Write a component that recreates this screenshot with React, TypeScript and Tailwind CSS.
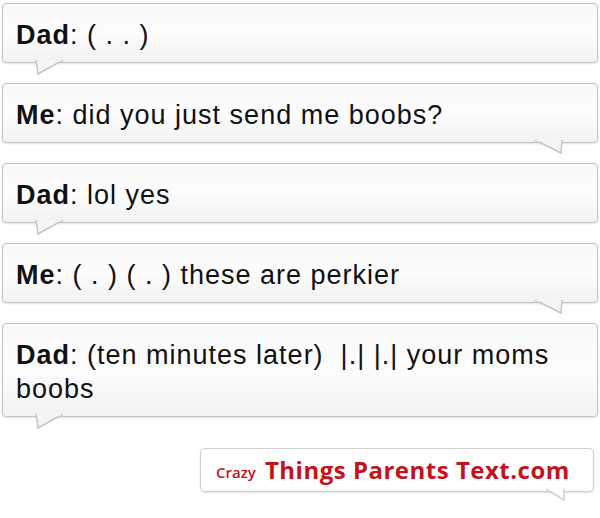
const messages = [
  { who: "Dad", text: " ( . . )", side: "left" },
  { who: "Me", text: " did you just send me boobs?", side: "right" },
  { who: "Dad", text: " lol yes", side: "left" },
  { who: "Me", text: " ( . ) ( . ) these are perkier", side: "right" },
  { who: "Dad", text: " (ten minutes later)  |.| |.| your moms boobs", side: "left" },
];

const Tail = ({ side }: { side: string }) => {
  if (side === "left") {
    return (
      <svg
        className="absolute left-[30px] top-full -mt-[2px]"
        width="32"
        height="16"
        viewBox="0 0 32 16"
      >
        <path d="M3 0 L5 14 L30 0" fill="#f4f4f4" stroke="#c4c4c4" strokeWidth="1.5" />
        <rect x="4" y="0" width="24" height="1.6" fill="#f4f4f4" />
      </svg>
    );
  }
  return (
    <svg
      className="absolute right-[32px] top-full -mt-[2px]"
      width="32"
      height="16"
      viewBox="0 0 32 16"
    >
      <path d="M2 0 L28 13 L29 0" fill="#f4f4f4" stroke="#c4c4c4" strokeWidth="1.5" />
      <rect x="4" y="0" width="24" height="1.6" fill="#f4f4f4" />
    </svg>
  );
};

const App = () => {
  return (
    <div className="w-[600px] h-[518px] bg-white overflow-hidden pt-[3px] px-[2px] font-['Liberation_Sans',Arial,sans-serif] text-[#111]">
      <div className="flex flex-col gap-[20px]">
        {messages.map((m, i) => (
          <div
            key={i}
            className="relative rounded-[4px] border border-[#c4c4c4] bg-gradient-to-b from-[#f9f9f9] via-[#fdfdfd] to-[#f2f2f2] shadow-[0_1px_2px_rgba(0,0,0,0.12)] pl-[13px] pr-[10px] pt-[14px] pb-[10px] text-[27px] leading-[34px] tracking-[1px] whitespace-pre-wrap"
          >
            <span className="font-bold">{m.who}</span>
            <span>:</span>
            {m.text}
            <Tail side={m.side} />
          </div>
        ))}
      </div>
      <div className="flex justify-end mt-[31px] pr-[4px]">
        <div className="relative w-[394px] h-[44px] rounded-[5px] border border-[#cfcfcf] bg-white shadow-[0_1px_2px_rgba(0,0,0,0.12)] flex items-center pl-[15px] gap-[9px] font-['Open_Sans',sans-serif] text-[#c4111b]">
          <span className="text-[15px] font-semibold mt-[4px]">Crazy</span>
          <span className="text-[24px] font-bold tracking-[0.5px]">Things Parents Text.com</span>
          <svg
            className="absolute right-[26px] top-full -mt-[2px]"
            width="22"
            height="14"
            viewBox="0 0 22 14"
          >
            <path d="M1 0 L19 11 L19 0" fill="#ffffff" stroke="#cfcfcf" strokeWidth="1.5" />
            <rect x="3" y="0" width="15" height="1.6" fill="#ffffff" />
          </svg>
        </div>
      </div>
    </div>
  );
};

export default App;
